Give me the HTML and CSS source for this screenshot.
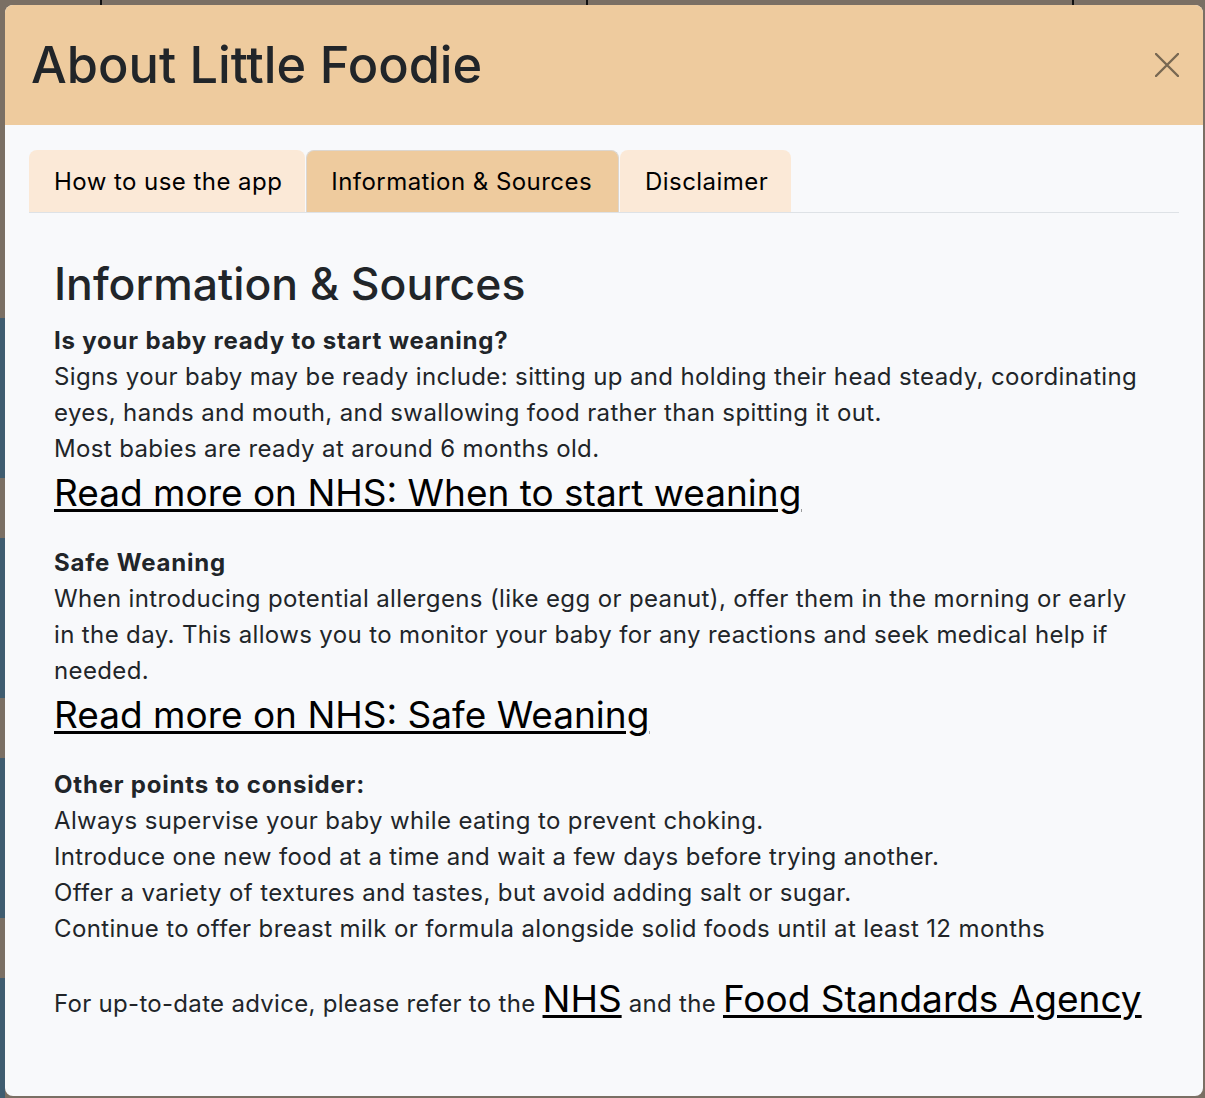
FILE: index.html
```html
<!DOCTYPE html>
<html lang="en">
<head>
<meta charset="utf-8">
<title>About Little Foodie</title>
<link rel="stylesheet" href="styles.css">
</head>
<body>
<div class="modal">
  <header class="modal-header">
    <h1 class="modal-title">About Little Foodie</h1>
    <button class="btn-close" aria-label="Close">
      <svg width="24" height="24" viewBox="0 0 24 24"><path d="M1 1 L23 23 M23 1 L1 23" stroke="currentColor" stroke-width="2.4" stroke-linecap="round"/></svg>
    </button>
  </header>
  <div class="modal-body">
    <nav class="tabs">
      <span class="tab">How to use the app</span>
      <span class="tab active">Information &amp; Sources</span>
      <span class="tab">Disclaimer</span>
    </nav>
    <section class="content">
      <h2 class="section-title">Information &amp; Sources</h2>
      <div class="block">
        <strong class="lead">Is your baby ready to start weaning?</strong>
        <p>Signs your baby may be ready include: sitting up and holding their head steady, coordinating eyes, hands and mouth, and swallowing food rather than spitting it out.<br>Most babies are ready at around 6 months old.</p>
        <a class="big-link" href="#">Read more on NHS: When to start weaning</a>
      </div>
      <div class="block">
        <strong class="lead">Safe Weaning</strong>
        <p>When introducing potential allergens (like egg or peanut), offer them in the morning or early in the day. This allows you to monitor your baby for any reactions and seek medical help if needed.</p>
        <a class="big-link" href="#">Read more on NHS: Safe Weaning</a>
      </div>
      <div class="block">
        <strong class="lead">Other points to consider:</strong>
        <p>Always supervise your baby while eating to prevent choking.<br>Introduce one new food at a time and wait a few days before trying another.<br>Offer a variety of textures and tastes, but avoid adding salt or sugar.<br>Continue to offer breast milk or formula alongside solid foods until at least 12 months</p>
      </div>
      <p class="footer-note">For up-to-date advice, please refer to the <a class="big-link inline" href="#">NHS</a> and the <a class="big-link inline" href="#">Food Standards Agency</a></p>
    </section>
  </div>
</div>
</body>
</html>
```

FILE: styles.css
```css
html, body {
  margin: 0;
  padding: 0;
}
body {
  width: 1205px;
  height: 1098px;
  overflow: hidden;
  background-color: #7a6f64;
  background-image:
    linear-gradient(#111, #111),
    linear-gradient(#111, #111),
    linear-gradient(#111, #111),
    repeating-linear-gradient(to bottom, #7a6f64 0 60px, #3f5c70 60px 220px);
  background-size: 2px 5px, 2px 5px, 2px 5px, 5px 900px;
  background-position: 100px 0, 586px 0, 1072px 0, 0 258px;
  background-repeat: no-repeat;
  font-family: "Inter", "Liberation Sans", sans-serif;
  color: #212529;
  padding: 5px 2px 2px 5px;
  box-sizing: border-box;
}
.modal {
  height: 1091px;
  background: #f8f9fb;
  border-radius: 8px;
  overflow: hidden;
  display: flex;
  flex-direction: column;
}
.modal-header {
  height: 120px;
  box-sizing: border-box;
  background: #eecb9e;
  display: flex;
  align-items: center;
  justify-content: space-between;
  padding: 0 24px 0 26px;
}
.modal-title {
  margin: 0;
  font-size: 50.5px;
  font-weight: 500;
  line-height: 1;
  color: #212529;
}
.btn-close {
  border: 0;
  background: transparent;
  padding: 0;
  color: #786852;
  width: 24px;
  height: 24px;
  display: flex;
}
.modal-body {
  padding: 25px 24px 24px 24px;
  flex: 1;
}
.tabs {
  display: flex;
  gap: 1px;
  border-bottom: 1px solid #dee2e6;
}
.tab {
  height: 62px;
  box-sizing: border-box;
  display: flex;
  align-items: center;
  padding: 0 22px 0 24px;
  background: #fbe9d7;
  border-radius: 8px 8px 0 0;
  font-size: 24px;
  letter-spacing: 0.45px;
  color: #000;
  border: 1px solid transparent;
  border-bottom: 0;
}
.tab.active {
  background: #eecb9e;
  border-color: #dcd6cf;
  padding: 0 26px 0 24px;
}
.content {
  padding: 46px 25px 0 25px;
}
.section-title {
  margin: 0 0 14px 0;
  font-size: 44.5px;
  font-weight: 500;
  line-height: 50px;
}
.block {
  margin-bottom: 26px;
  font-size: 24px;
  line-height: 36px;
  letter-spacing: 0.37px;
}
.lead {
  display: block;
  font-weight: 700;
  letter-spacing: 0.8px;
}
.block p {
  margin: 0;
}
.big-link {
  display: block;
  color: #000;
  font-size: 37px;
  letter-spacing: 0;
  line-height: 52px;
  text-decoration: underline;
  text-decoration-thickness: 3px;
  text-underline-offset: 3px;
}
.big-link.inline {
  display: inline;
}
.footer-note {
  margin: 20px 0 0 0;
  font-size: 24px;
  letter-spacing: 0.3px;
  line-height: 52px;
}
```
